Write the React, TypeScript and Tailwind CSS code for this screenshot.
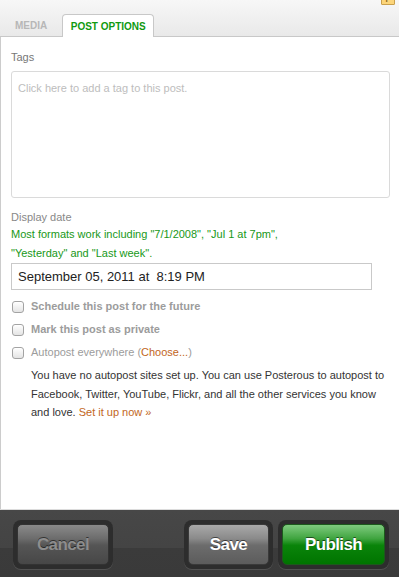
import React from "react";

function Checkbox() {
  return (
    <span className="block h-[12px] w-[12px] shrink-0 rounded-[3px] border border-[#a3a3a3] bg-gradient-to-b from-white to-[#e4e4e4] shadow-[inset_0_1px_0_rgba(255,255,255,0.9)]" />
  );
}

function FooterButton({
  label,
  variant,
  width,
}: {
  label: string;
  variant: "cancel" | "save" | "publish";
  width: string;
}) {
  const face =
    variant === "publish"
      ? "bg-[linear-gradient(#7fcb7f_0%,#3fa43f_35%,#0a840a_52%,#007400_100%)] border-[#1c5a1c] text-white"
      : variant === "save"
        ? "bg-[linear-gradient(#a9a9a9_0%,#8a8a8a_35%,#6c6c6c_52%,#5c5c5c_100%)] border-[#3a3a3a] text-white"
        : "bg-[linear-gradient(#8a8a8a_0%,#6c6c6c_35%,#555555_52%,#474747_100%)] border-[#333333] text-[#8d8d8d]";
  return (
    <div className="rounded-[8px] bg-[#2d2d2d] p-[4px] shadow-[0_1px_0_rgba(255,255,255,0.12)]">
      <button
        className={`flex h-[41px] items-center justify-center rounded-[5px] border text-[17px] font-bold tracking-[-0.6px] ${face} ${width} [text-shadow:0_-1px_0_rgba(0,0,0,0.55)]`}
      >
        {label}
      </button>
    </div>
  );
}

export default function App() {
  return (
    <div className="flex h-[577px] w-[399px] flex-col bg-white font-['Liberation_Sans',Arial,sans-serif] text-[11px]">
      <div className="relative flex h-[37px] shrink-0 items-end border-b border-[#c8c8c8] bg-gradient-to-b from-[#f7f7f7] to-[#e9e9e9] pl-[15px]">
        <span className="absolute right-[4px] top-[-6px] flex h-[11px] w-[14px] items-end justify-center rounded-[1px] border border-[#c9a04d] bg-[#fcd57a] text-[8px] font-bold leading-none text-[#8a6420]">
          F
        </span>
        <span className="flex h-[22px] items-center text-[10px] font-bold text-[#b7b7b7]">
          MEDIA
        </span>
        <span className="-mb-px ml-[15px] flex h-[23px] w-[92px] items-center justify-center rounded-t-[4px] border border-b-0 border-[#c8c8c8] bg-white text-[10px] font-bold text-[#109a10]">
          POST OPTIONS
        </span>
      </div>

      <div className="flex flex-1 flex-col border-l border-[#cccccc] pl-[10px] pr-[9px]">
        <div className="mt-[13px] leading-[14px] text-[#777]">Tags</div>
        <div className="mt-[7px] h-[127px] w-[379px] rounded-[3px] border border-[#dadada] px-[6px] pt-[8px] text-[#bdbdbd]">
          Click here to add a tag to this post.
        </div>

        <div className="mt-[12px] leading-[14px] text-[#888]">Display date</div>
        <div className="mt-[1px] leading-[19px] text-[#189818]">
          Most formats work including "7/1/2008", "Jul 1 at 7pm",
          <br />
          "Yesterday" and "Last week".
        </div>
        <div className="flex h-[27px] w-[361px] items-center border border-[#c9c9c9] px-[6px] text-[13px] text-[#222]">
          September 05, 2011 at&nbsp;&nbsp;8:19 PM
        </div>

        <div className="mt-[10px] flex flex-col gap-[10px] pl-[1px]">
          <label className="flex h-[13px] items-center gap-[7px] font-bold text-[#9c9c9c]">
            <Checkbox />
            Schedule this post for the future
          </label>
          <label className="flex h-[13px] items-center gap-[7px] font-bold text-[#9c9c9c]">
            <Checkbox />
            Mark this post as private
          </label>
          <label className="flex h-[13px] items-center gap-[7px] text-[#9c9c9c]">
            <Checkbox />
            <span>
              Autopost everywhere (
              <span className="text-[#c2661c]">Choose...</span>)
            </span>
          </label>
        </div>

        <p className="mt-[7px] whitespace-nowrap pl-[20px] leading-[18.5px] text-[#333]">
          You have no autopost sites set up. You can use Posterous to autopost to
          <br />
          Facebook, Twitter, YouTube, Flickr, and all the other services you know
          <br />
          and love. <span className="text-[#c2661c]">Set it up now »</span>
        </p>
      </div>

      <div className="flex h-[68px] shrink-0 items-center border-t border-[#dcdcdc] bg-[linear-gradient(#474747_0%,#444444_56%,#3b3b3b_57%,#3a3a3a_100%)] pl-[13px] pr-[10px] pt-[2px]">
        <FooterButton label="Cancel" variant="cancel" width="w-[92px]" />
        <div className="flex-1" />
        <FooterButton label="Save" variant="save" width="w-[81px]" />
        <div className="w-[5px]" />
        <FooterButton label="Publish" variant="publish" width="w-[103px]" />
      </div>
    </div>
  );
}
